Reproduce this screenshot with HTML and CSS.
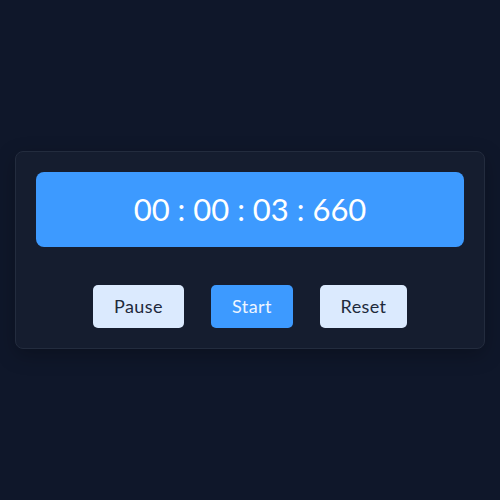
FILE: index.html
```html
<!DOCTYPE html>
<html>
<head>
<meta charset="utf-8">
<link rel="stylesheet" href="styles.css">
</head>
<body>
<div class="card">
  <div class="display">00 : 00 : 03 : 660</div>
  <div class="controls">
    <button class="btn btn-light">Pause</button>
    <button class="btn btn-blue">Start</button>
    <button class="btn btn-light">Reset</button>
  </div>
</div>
</body>
</html>
```
FILE: styles.css
```css
html, body {
  margin: 0;
  padding: 0;
}
body {
  background: #0f172a;
  height: 500px;
  display: flex;
  align-items: center;
  justify-content: center;
  font-family: Lato, "Open Sans", sans-serif;
}
.card {
  box-sizing: border-box;
  width: 470px;
  height: 198px;
  margin-top: -1px;
  background: #151d2f;
  border: 1px solid #232c3e;
  border-radius: 8px;
  padding: 20px;
  box-shadow: 0 6px 20px rgba(0, 0, 0, 0.25);
}
.display {
  height: 75px;
  background: #3d9aff;
  border-radius: 8px;
  color: #ffffff;
  font-size: 31px;
  display: flex;
  align-items: center;
  justify-content: center;
}
.controls {
  margin-top: 38px;
  display: flex;
  justify-content: center;
  gap: 27px;
}
.btn {
  height: 43px;
  border: none;
  border-radius: 5px;
  font-family: Lato, "Open Sans", sans-serif;
  font-size: 18px;
  letter-spacing: 0.4px;
  padding: 0;
}
.btn-light {
  background: #dbeafe;
  color: #1e293b;
}
.btn-blue {
  background: #3d9aff;
  color: #eef5ff;
}
.btn:nth-child(1) { width: 91px; }
.btn:nth-child(2) { width: 82px; }
.btn:nth-child(3) { width: 87px; }
```
